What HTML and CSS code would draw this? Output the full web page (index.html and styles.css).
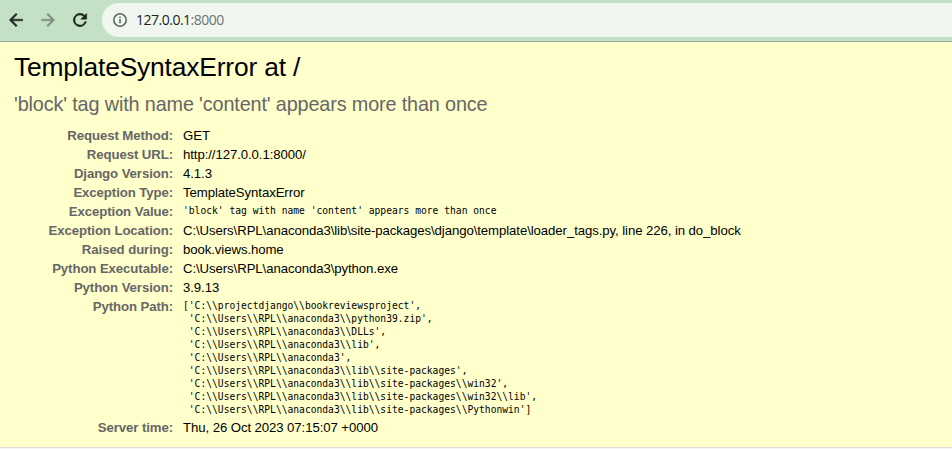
FILE: index.html
```html
<!DOCTYPE html>
<html lang="en">
<head>
<meta charset="utf-8">
<title>TemplateSyntaxError at /</title>
<link rel="stylesheet" href="styles.css">
</head>
<body>
<header class="toolbar">
  <svg class="nav" viewBox="0 0 24 24"><path d="M20 11H7.8l5.6-5.6L12 4l-8 8 8 8 1.4-1.4L7.8 13H20z"/></svg>
  <svg class="nav disabled" viewBox="0 0 24 24"><path d="M4 11h12.2l-5.6-5.6L12 4l8 8-8 8-1.4-1.4 5.6-5.6H4z"/></svg>
  <svg class="nav" viewBox="0 0 24 24"><path d="M17.65 6.35A8 8 0 1 0 19.73 14h-2.08A6 6 0 1 1 12 6c1.66 0 3.14.69 4.22 1.78L13 11h7V4z"/></svg>
  <div class="address">
    <svg class="info" viewBox="0 0 14 14"><circle cx="7" cy="7" r="6.2"/><path d="M7 6v4.2M7 3.5v1.5"/></svg>
    <span class="url">127.0.0.1<span class="port">:8000</span></span>
  </div>
</header>
<main class="summary">
  <h1>TemplateSyntaxError at /</h1>
  <p class="reason">'block' tag with name 'content' appears more than once</p>
  <table class="meta">
    <tr><th>Request Method:</th><td>GET</td></tr>
    <tr><th>Request URL:</th><td>http://127.0.0.1:8000/</td></tr>
    <tr><th>Django Version:</th><td>4.1.3</td></tr>
    <tr><th>Exception Type:</th><td>TemplateSyntaxError</td></tr>
    <tr><th>Exception Value:</th><td><pre>'block' tag with name 'content' appears more than once</pre></td></tr>
    <tr><th>Exception Location:</th><td>C:\Users\RPL\anaconda3\lib\site-packages\django\template\loader_tags.py, line 226, in do_block</td></tr>
    <tr><th>Raised during:</th><td>book.views.home</td></tr>
    <tr><th>Python Executable:</th><td>C:\Users\RPL\anaconda3\python.exe</td></tr>
    <tr><th>Python Version:</th><td>3.9.13</td></tr>
    <tr class="paths"><th>Python Path:</th><td><pre>['C:\\projectdjango\\bookreviewsproject',
 'C:\\Users\\RPL\\anaconda3\\python39.zip',
 'C:\\Users\\RPL\\anaconda3\\DLLs',
 'C:\\Users\\RPL\\anaconda3\\lib',
 'C:\\Users\\RPL\\anaconda3',
 'C:\\Users\\RPL\\anaconda3\\lib\\site-packages',
 'C:\\Users\\RPL\\anaconda3\\lib\\site-packages\\win32',
 'C:\\Users\\RPL\\anaconda3\\lib\\site-packages\\win32\\lib',
 'C:\\Users\\RPL\\anaconda3\\lib\\site-packages\\Pythonwin']</pre></td></tr>
    <tr><th>Server time:</th><td>Thu, 26 Oct 2023 07:15:07 +0000</td></tr>
  </table>
</main>
</body>
</html>
```
FILE: styles.css
```css
* { box-sizing: border-box; margin: 0; padding: 0; }
body {
  background: #f6f6f6;
  color: #000;
  font: 13.2px/15px "Liberation Sans", Arial, sans-serif;
  overflow: hidden;
}
.toolbar {
  display: flex;
  align-items: center;
  height: 42px;
  padding: 0 0 1px 6px;
  background: #c5e1c5;
  border-bottom: 1px solid #94b49b;
}
.nav { width: 20px; height: 20px; margin-right: 12px; flex: none; fill: #1f2421; stroke: #1f2421; stroke-width: 0.6; }
.disabled { fill: #7d8f80; stroke: #7d8f80; }
.address {
  display: flex;
  align-items: center;
  flex: 1;
  height: 34px;
  padding-left: 11px;
  background: #f0f7f0;
  border-radius: 17px 0 0 17px;
}
.info { width: 14px; height: 14px; margin-right: 9px; fill: none; stroke: #5f6762; stroke-width: 1.6; }
.url { font: 14px/18px "Open Sans", sans-serif; letter-spacing: -0.5px; color: #202421; }
.port { color: #6c746e; }
.summary {
  height: 406px;
  padding: 10px 14px 0;
  background: #ffffcc;
  border-bottom: 1px solid #ddd;
}
h1 { font-size: 26.4px; line-height: 30px; font-weight: normal; letter-spacing: -0.18px; }
.reason { margin-top: 11px; font-size: 19.8px; line-height: 23px; letter-spacing: -0.125px; color: #666; }
.meta { margin-top: 10px; border-collapse: collapse; letter-spacing: -0.085px; }
th { width: 159px; padding: 2px 0; text-align: right; vertical-align: top; color: #666; white-space: nowrap; }
td { padding: 2px 0 2px 10px; vertical-align: top; white-space: nowrap; }
pre { height: 15px; font: 9.65px/13px "DejaVu Sans Mono", monospace; letter-spacing: 0.01px; }
.paths pre { height: 117px; }
```
